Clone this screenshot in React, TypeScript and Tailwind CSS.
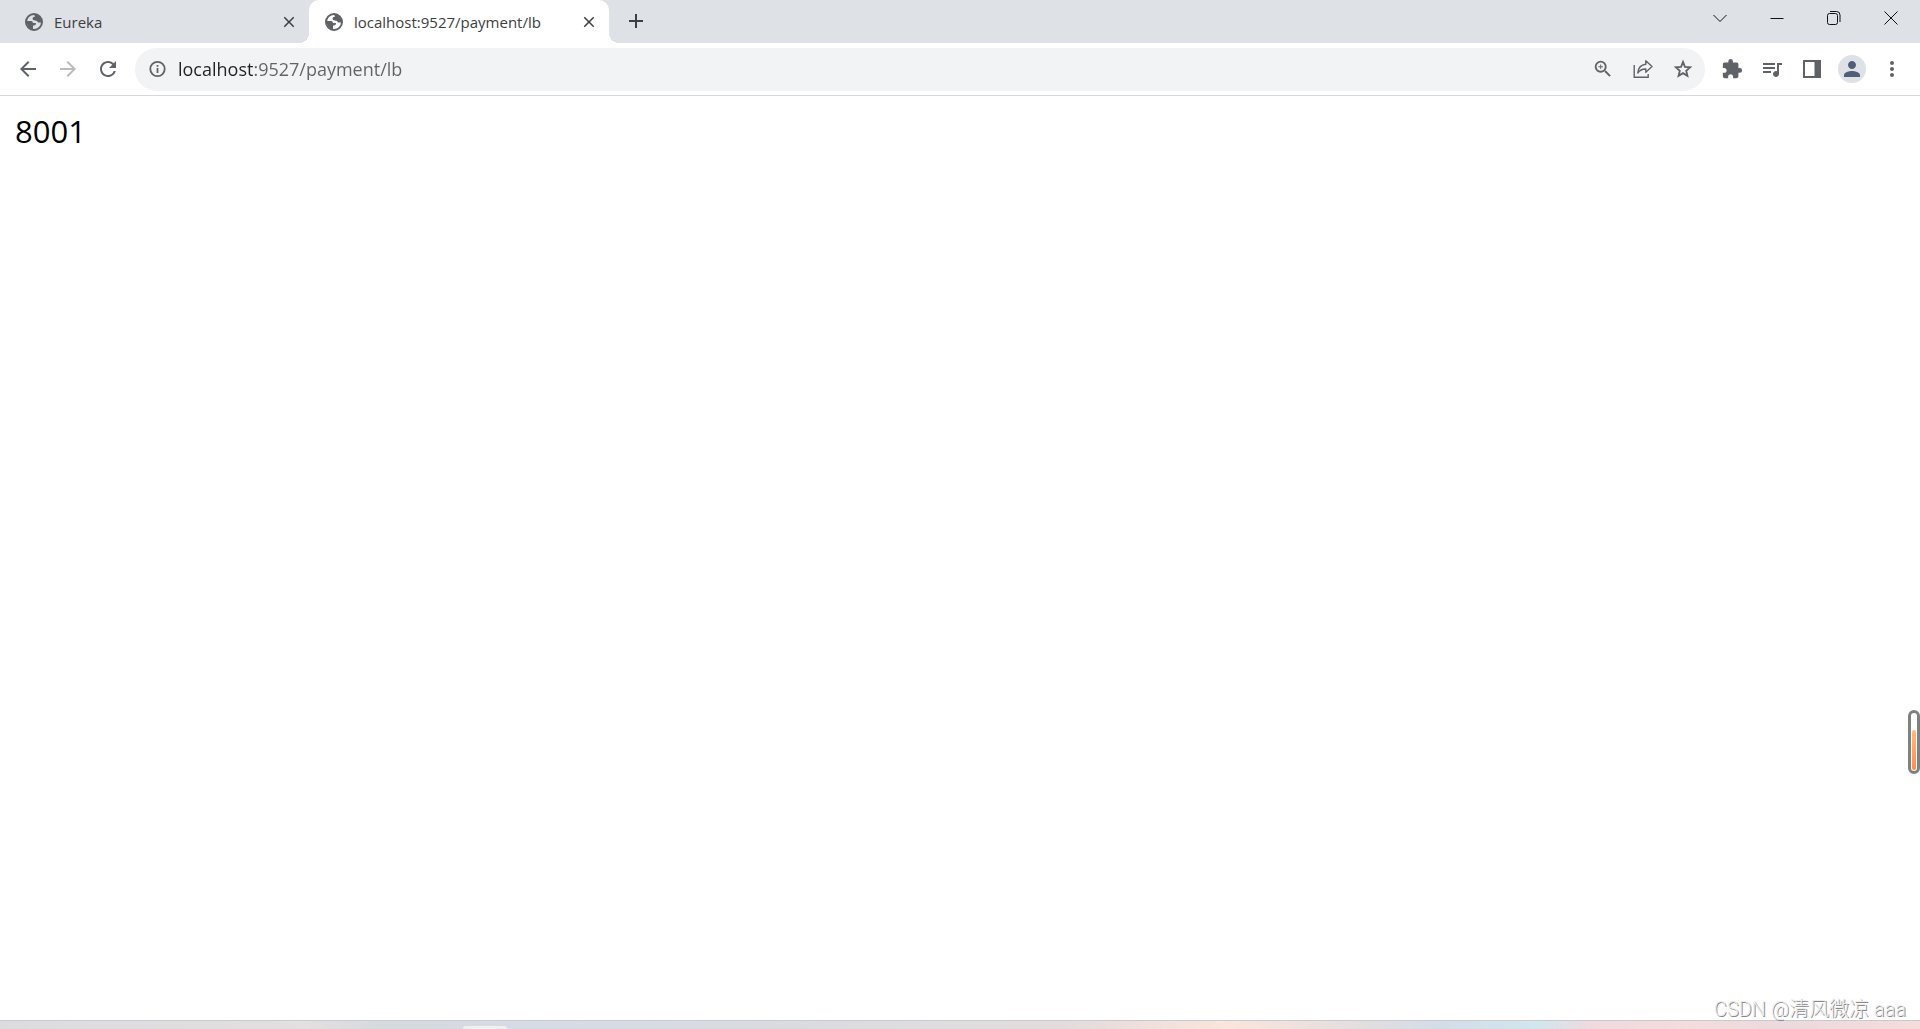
import type { ReactNode } from "react";
import {
  MdAdd,
  MdArrowBack,
  MdArrowForward,
  MdClose,
  MdExtension,
  MdMoreVert,
  MdPerson,
  MdQueueMusic,
  MdRefresh,
  MdZoomIn,
} from "react-icons/md";

const tabs = [
  { title: "Eureka", active: false },
  { title: "localhost:9527/payment/lb", active: true },
];

function GlobeIcon() {
  return (
    <svg viewBox="0 0 18 18" className="h-[18px] w-[18px] shrink-0">
      <circle cx="9" cy="9" r="8" fill="none" stroke="#5f6368" strokeWidth="2" />
      <path
        fill="#5f6368"
        d="M1.5 8 L6 8 Q8 8 8 10 L11 10 Q11 12.5 9 12.5 L8 12.5 L8 16.5 Q2 15.5 1.5 8 Z M9 1.5 Q14 1.5 16 6 L16.5 9.5 L13 9.5 Q12.5 7.5 10 7.5 Q7.5 7.5 7.5 5.5 Q7.5 4 10 3.5 Z"
      />
    </svg>
  );
}

function InfoIcon() {
  return (
    <svg viewBox="0 0 20 20" className="h-5 w-5">
      <circle cx="10.5" cy="10" r="7.2" fill="none" stroke="#5f6368" strokeWidth="1.8" />
      <path fill="#5f6368" d="M9.6 9 H11.4 V14 H9.6 Z M9.6 6 H11.4 V7.8 H9.6 Z" />
    </svg>
  );
}

function StarIcon() {
  return (
    <svg viewBox="0 0 24 24" className="h-[22px] w-[22px]">
      <path
        fill="none"
        stroke="#5f6368"
        strokeWidth="2"
        d="M12 4.3 L14.1 9.6 L19.8 10.1 L15.5 13.9 L16.8 19.5 L12 16.5 L7.2 19.5 L8.5 13.9 L4.2 10.1 L9.9 9.6 Z"
      />
    </svg>
  );
}

function ShareIcon() {
  return (
    <svg viewBox="0 0 20 20" className="h-5 w-5" fill="none" stroke="#5f6368" strokeWidth="1.4">
      <path d="M1.2 6 V18.2 H15.2 V15" />
      <path d="M12.8 1.8 L19 7.6 L12.8 13.2 V10 Q7.8 9.8 4.8 14 Q5.4 6 12.8 5.2 Z" strokeLinejoin="round" />
    </svg>
  );
}

function SidePanelIcon() {
  return (
    <svg viewBox="0 0 18 18" className="h-[18px] w-[18px]">
      <path fill="#5f6368" fillRule="evenodd" d="M0 0 H18 V18 H0 Z M2 2 V16 H11.5 V2 Z" />
    </svg>
  );
}

function IconButton({ label, children }: { label: string; children: ReactNode }) {
  return (
    <button
      type="button"
      aria-label={label}
      className="flex h-10 w-10 shrink-0 items-center justify-center text-[#5f6368]"
    >
      {children}
    </button>
  );
}

function WindowButton({ label, path }: { label: string; path: string }) {
  return (
    <button type="button" aria-label={label} className="flex h-9 w-[57px] items-center justify-center">
      <svg viewBox="0 0 14 14" className="h-[14px] w-[14px]" fill="none" stroke="#111111">
        <path d={path} />
      </svg>
    </button>
  );
}

function Tab({ title, active }: { title: string; active: boolean }) {
  return (
    <div
      className={`relative flex h-[43px] w-[300px] items-center pr-2 pl-4 ${
        active ? "rounded-t-[10px] bg-white" : ""
      }`}
    >
      {active && (
        <>
          <span className="absolute bottom-0 -left-[10px] h-[10px] w-[10px] bg-[radial-gradient(circle_at_0_0,transparent_10px,white_10px)]" />
          <span className="absolute -right-[10px] bottom-0 h-[10px] w-[10px] bg-[radial-gradient(circle_at_100%_0,transparent_10px,white_10px)]" />
        </>
      )}
      <button type="button" className="flex min-w-0 flex-1 items-center gap-[11px] text-left">
        <GlobeIcon />
        <span className="truncate text-[15px] leading-5 text-[#3c4043]">{title}</span>
      </button>
      <button
        type="button"
        aria-label={`Close ${title}`}
        className="flex h-6 w-6 items-center justify-center text-[#3c4043]"
      >
        <MdClose className="h-[18px] w-[18px]" />
      </button>
    </div>
  );
}

export default function App() {
  return (
    <div className="relative flex min-h-screen flex-col bg-white font-['Open_Sans','Noto_Sans_CJK_SC',sans-serif]">
      <header>
        <div className="flex h-[43px] bg-[#dee1e6] pr-px pl-[9px]">
          {tabs.map((tab) => (
            <Tab key={tab.title} title={tab.title} active={tab.active} />
          ))}
          <button
            type="button"
            aria-label="New tab"
            className="ml-[15px] flex h-[42px] w-6 items-center justify-center text-[#3c4043]"
          >
            <MdAdd className="h-6 w-6" />
          </button>
          <div className="ml-auto flex">
            <WindowButton label="Search tabs" path="M0.5 4 L7 10.5 L13.5 4" />
            <WindowButton label="Minimize" path="M0.5 7.5 H13.5" />
            <WindowButton
              label="Restore"
              path="M2.5 2.5 H8.5 Q10.5 2.5 10.5 4.5 V11.5 Q10.5 13.5 8.5 13.5 H2.5 Q0.5 13.5 0.5 11.5 V4.5 Q0.5 2.5 2.5 2.5 M3 0.5 H9.5 Q13 0.5 13 4 V11"
            />
            <WindowButton label="Close" path="M0.5 0.5 L13.5 13.5 M13.5 0.5 L0.5 13.5" />
          </div>
        </div>

        <div className="flex h-[53px] items-center border-b border-[#d5d7da] px-2">
          <IconButton label="Back">
            <MdArrowBack className="h-6 w-6" />
          </IconButton>
          <IconButton label="Forward">
            <MdArrowForward className="h-6 w-6 text-[#babcbe]" />
          </IconButton>
          <IconButton label="Reload">
            <MdRefresh className="h-6 w-6" />
          </IconButton>

          <div className="mx-[7px] flex h-[43px] flex-1 items-center rounded-full bg-[#f1f3f4] pr-0.5 pl-3">
            <button type="button" aria-label="View site information">
              <InfoIcon />
            </button>
            <input
              type="text"
              aria-label="Address and search bar"
              defaultValue="localhost:9527/payment/lb"
              className="ml-[11px] h-8 min-w-0 flex-1 bg-linear-to-r from-[#202124] from-[77px] to-[#5f6368] to-[77px] bg-clip-text text-lg text-transparent outline-none"
            />
            <IconButton label="Zoom">
              <MdZoomIn className="h-[22px] w-[22px]" />
            </IconButton>
            <IconButton label="Share this page">
              <ShareIcon />
            </IconButton>
            <IconButton label="Bookmark this tab">
              <StarIcon />
            </IconButton>
          </div>

          <IconButton label="Extensions">
            <MdExtension className="h-[22px] w-[22px]" />
          </IconButton>
          <IconButton label="Media controls">
            <MdQueueMusic className="h-6 w-6" />
          </IconButton>
          <IconButton label="Side panel">
            <SidePanelIcon />
          </IconButton>
          <IconButton label="Profile">
            <span className="flex h-7 w-7 items-center justify-center rounded-full bg-[#dee1e6]">
              <MdPerson className="h-6 w-6 text-[#505f79]" />
            </span>
          </IconButton>
          <IconButton label="Menu">
            <MdMoreVert className="h-6 w-6" />
          </IconButton>
        </div>
      </header>

      <main className="flex-1 px-[15px] pt-[15px]">
        <p className="text-[31px] leading-10 text-black">8001</p>
      </main>

      <div className="absolute top-[710px] right-0 flex h-16 w-3 items-end rounded-full border-3 border-[#808080] bg-white p-px">
        <div className="h-10 w-full rounded-xs bg-linear-to-b from-[#ffb980] to-[#ff8c4a]" />
      </div>

      <footer className="flex h-[9px] justify-start border-t border-[#c6cbcf] bg-[linear-gradient(to_right,#dcdcde_0%,#e4dfe1_16%,#d5dadd_20%,#d6dce6_28%,#d8dbe0_38%,#e0dddf_50%,#e5dcdc_56%,#fbe5dc_64%,#e3dedf_71%,#d3dde8_75%,#d2e6ee_80%,#f0dade_83%,#f5dcdd_88%,#ecdade_93%,#f7dcdb_100%)]">
        <div className="ml-[463px] h-[3px] w-11 self-end rounded-t-sm bg-[#f0f0f0]" />
      </footer>

      <p className="absolute right-[14px] bottom-1.5 font-['Roboto','Noto_Sans_CJK_SC',sans-serif] text-xl leading-7 font-light text-[#eeeeee] [text-shadow:1px_1px_0_#888888]">
        CSDN @清风微凉 aaa
      </p>
    </div>
  );
}
